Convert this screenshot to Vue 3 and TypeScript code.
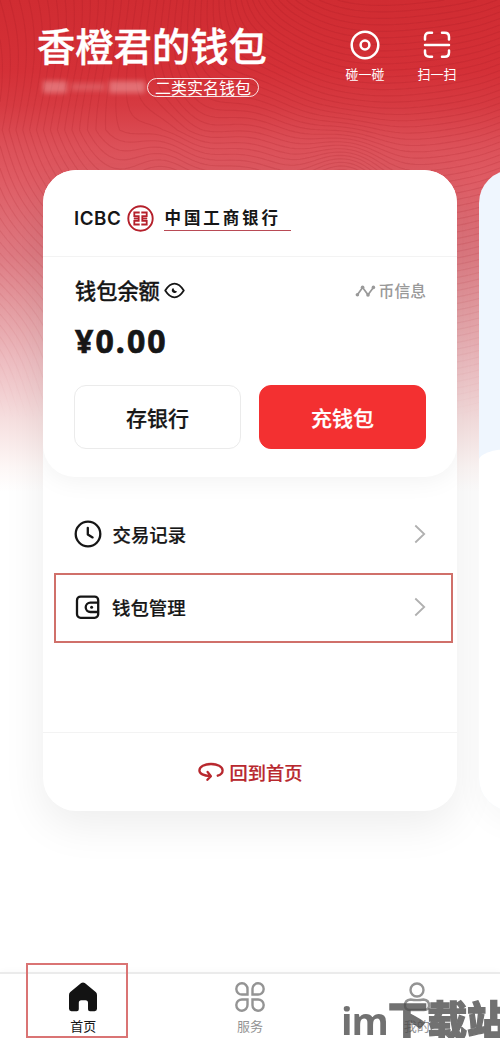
<script setup lang="ts">
interface Action { label: string; kind: 'touch' | 'scan' }
interface Row { label: string; kind: 'clock' | 'wallet'; marked: boolean }
interface Tab { label: string; kind: 'home' | 'service' | 'me'; active: boolean }

const actions: Action[] = [
  { label: '碰一碰', kind: 'touch' },
  { label: '扫一扫', kind: 'scan' },
]
const rows: Row[] = [
  { label: '交易记录', kind: 'clock', marked: false },
  { label: '钱包管理', kind: 'wallet', marked: true },
]
const tabs: Tab[] = [
  { label: '首页', kind: 'home', active: true },
  { label: '服务', kind: 'service', active: false },
  { label: '我的', kind: 'me', active: false },
]

// Height field whose contour lines decorate the red backdrop.
function field(x: number, y: number): number {
  const left = 45 - x / 8 + 1.3 * Math.sin(y / 45 + x / 60) + Math.max(0, y - 130) / 14
  const ridge = 6 * Math.exp(-((x - 165) ** 2) / 1500 - ((y - 190) ** 2) / 9000)
  const bowl = y / 6.5 + ((x - 400) ** 2) * 0.00035 + Math.sin(x / 30) * 0.4
  const t = 1 / (1 + Math.exp(-(x - 235 + (y - 60) * 0.25) / 22))
  const knot = 8 * Math.exp(-((x - 345) ** 2) / 1500 - ((y - 185) ** 2) / 2200)
  return left * (1 - t) + (bowl + knot) * t + ridge
}

function contours(w: number, h: number, s: number): string {
  const out: string[] = []
  for (let x = 0; x < w; x += s) {
    for (let y = 0; y < h; y += s) {
      const c = [[x, y], [x + s, y], [x + s, y + s], [x, y + s]]
      const v = c.map(([a, b]) => field(a, b))
      const lo = Math.ceil(Math.min(...v))
      const hi = Math.floor(Math.max(...v))
      for (let level = lo; level <= hi; level++) {
        const p: string[] = []
        for (let i = 0; i < 4; i++) {
          const j = (i + 1) % 4
          if ((v[i] < level) !== (v[j] < level)) {
            const k = (level - v[i]) / (v[j] - v[i])
            p.push(`${(c[i][0] + (c[j][0] - c[i][0]) * k).toFixed(1)} ${(c[i][1] + (c[j][1] - c[i][1]) * k).toFixed(1)}`)
          }
        }
        if (p.length >= 2) out.push(`M${p[0]}L${p[1]}`)
      }
    }
  }
  return out.join('')
}
const linePath = contours(500, 420, 5)
</script>

<template>
  <div class="page">
    <svg class="lines" width="500" height="420" viewBox="0 0 500 420">
      <defs>
        <linearGradient id="fade" x1="0" y1="0" x2="0" y2="1">
          <stop offset="0" stop-color="#fff" />
          <stop offset=".45" stop-color="#fff" stop-opacity=".8" />
          <stop offset="1" stop-color="#fff" stop-opacity="0" />
        </linearGradient>
        <mask id="m"><rect width="500" height="420" fill="url(#fade)" /></mask>
      </defs>
      <path :d="linePath" mask="url(#m)" fill="none" stroke="#a01822" stroke-opacity=".2" stroke-width="1.1" />
    </svg>

    <header class="header">
      <div class="owner">
        <h1>香橙君的钱包</h1>
        <div class="sub">
          <span class="masked"><i class="b1"></i><i class="b2"></i><i class="b3"></i></span>
          <span class="pill">二类实名钱包</span>
        </div>
      </div>
      <div class="actions">
        <div v-for="a in actions" :key="a.kind" class="action">
          <svg width="30" height="30" viewBox="0 0 30 30" fill="none" stroke="#fff" stroke-width="2.5" stroke-linecap="round">
            <template v-if="a.kind === 'touch'">
              <circle cx="15" cy="15" r="13.3" /><circle cx="15" cy="15" r="4.4" />
            </template>
            <path v-else d="M3 9.5V7Q3 2.8 7.2 2.8H10M20 2.8H22.8Q27 2.8 27 7V9.5M27 20.5V22.5Q27 26.8 22.8 26.8H20M10 26.8H7.2Q3 26.8 3 22.5V20.5M3 14.9H27" />
          </svg>
          <span>{{ a.label }}</span>
        </div>
      </div>
    </header>

    <main class="deck">
      <section class="card">
        <div class="top">
          <div class="bank">
            <span class="icbc">ICBC</span>
            <svg class="seal" width="27" height="27" viewBox="0 0 27 27" fill="none" stroke="#b5202b">
              <circle cx="13.5" cy="13.5" r="12.2" stroke-width="1.9" />
              <path stroke-width="1.8" d="M12.7 7.5H7.3V11.2H11.7V15.8H7.3V19.5H12.7M14.3 7.5H19.7V11.2H15.3V15.8H19.7V19.5H14.3M6.8 13.5H11.7M15.3 13.5H20.2" />
            </svg>
            <span class="bankname">中国工商银行</span>
          </div>
          <div class="balance">
            <div class="brow">
              <span class="btitle">钱包余额</span>
              <svg width="21" height="17" viewBox="0 0 21 17" fill="none" stroke="#161616" stroke-width="1.8" stroke-linejoin="round">
                <path d="M1.2 8.5Q5.6 1.6 10.5 1.6T19.8 8.5Q15.4 15.4 10.5 15.4T1.2 8.5Z" />
                <path d="M9.3 5.9A2.7 2.7 0 1 0 13 9.2Q10.4 9.5 9.3 5.9Z" fill="#161616" stroke="none" />
              </svg>
              <span class="coin">
                <svg width="21" height="14" viewBox="0 0 21 14" fill="none" stroke="#999" stroke-width="1.7">
                  <path d="M2.4 10.8L7.6 3.4L13 10.8L18.4 3.4" />
                  <g fill="#999" stroke="none"><circle cx="2.4" cy="10.8" r="1.8" /><circle cx="7.6" cy="3.2" r="1.8" /><circle cx="13" cy="10.9" r="1.8" /><circle cx="18.4" cy="3.4" r="1.8" /></g>
                </svg>
                币信息
              </span>
            </div>
            <div class="amount">¥0.00</div>
            <div class="buttons">
              <button class="btn">存银行</button>
              <button class="btn primary">充钱包</button>
            </div>
          </div>
        </div>
        <div class="list">
          <div v-for="r in rows" :key="r.kind" class="row" :class="{ marked: r.marked }">
            <svg width="28" height="28" viewBox="0 0 28 28" fill="none" stroke="#161616" stroke-width="2.3" stroke-linecap="round" stroke-linejoin="round">
              <template v-if="r.kind === 'clock'">
                <circle cx="14" cy="14" r="12.3" /><path d="M13.8 7.8V14.4L18.6 17.4" />
              </template>
              <template v-else>
                <rect x="4" y="3.6" width="21.2" height="21.2" rx="3.6" />
                <path d="M25 9.6H17.4A4.7 4.7 0 0 0 17.4 19H25" />
                <circle cx="18.6" cy="14.3" r="1.5" fill="#161616" stroke="none" />
              </template>
            </svg>
            <span>{{ r.label }}</span>
            <svg class="chev" width="12" height="20" viewBox="0 0 12 20" fill="none" stroke="#b0b0b0" stroke-width="1.8"><path d="M1.3 1.5L10.2 10L1.3 18.5" /></svg>
          </div>
        </div>
        <div class="foot">
          <svg width="26" height="20" viewBox="0 0 26 20" fill="none" stroke="#b8282e" stroke-width="2.3" stroke-linecap="round" stroke-linejoin="round">
            <path d="M19.7 13.7Q24.6 12 24.6 8.4C24.6 4.4 19.4 2 13 2S1.4 4.4 1.4 8.4C1.4 11.6 5.8 13.9 12 14.1M9.6 10L12.9 14.1L9.4 17.8" />
          </svg>
          <span>回到首页</span>
        </div>
      </section>
      <section class="card next"><div class="nextbody"></div></section>
    </main>

    <nav class="tabs">
      <div v-for="t in tabs" :key="t.kind" class="tab" :class="{ active: t.active }">
        <svg width="30" height="30" viewBox="0 0 30 30" fill="none" stroke="#949494" stroke-width="2.4">
          <path v-if="t.kind === 'home'" fill="#131313" stroke="none" d="M13.2 1.1Q15 -.3 16.8 1.1L27.7 10Q29 11.2 29 13V26.8Q29 29.2 26.6 29.2H22Q20 29.2 20 27.2V20.8Q20 18.2 17.5 18.2H13.3Q10.8 18.2 10.8 20.8V27.2Q10.8 29.2 8.8 29.2H3.4Q1 29.2 1 26.8V13Q1 11.2 2.3 10Z" />
          <g v-else-if="t.kind === 'service'">
            <path d="M12.5 12.5H7.2A5.6 5.6 0 1 1 12.5 7.2Z" />
            <path d="M17.5 12.5V7.2A5.6 5.6 0 1 1 22.8 12.5Z" />
            <path d="M12.5 17.5V22.8A5.6 5.6 0 1 1 7.2 17.5Z" />
            <path d="M17.5 17.5H22.8A5.6 5.6 0 1 1 17.5 22.8Z" />
          </g>
          <g v-else>
            <circle cx="15" cy="8" r="6.5" />
            <path d="M8.5 17.5Q15 18.8 21.5 17.5Q27 18 27 23.5Q27 28 22 28H8Q3 28 3 23.5Q3 18 8.5 17.5Z" />
          </g>
        </svg>
        <span>{{ t.label }}</span>
      </div>
    </nav>
    <div class="mark"></div>
    <div class="watermark"><span class="im">im</span><span class="cn">下载站</span></div>
  </div>
</template>

<style scoped>
* { box-sizing: border-box; }
.page {
  position: relative;
  width: 500px;
  height: 1038px;
  overflow: hidden;
  display: flex;
  flex-direction: column;
  font-family: "Noto Sans CJK SC", sans-serif;
  color: #161616;
  background: linear-gradient(#d02c32 0, #d43037 70px, #d63a41 105px, #dc5058 145px, #df5c64 180px, #de7a82 255px, #e59ea3 310px, #eebfc3 365px, #f6dfdf 420px, #fdf6f5 465px, #fff 492px);
}
.lines { position: absolute; left: 0; top: 0; }
.header { position: relative; height: 170px; display: flex; justify-content: space-between; padding: 23px 27px 0 37px; color: #fff; flex: none; }
h1 { margin: 0; font-size: 38.3px; line-height: 44px; font-weight: 500; white-space: nowrap; -webkit-text-stroke: .4px #fff; }
.sub { display: flex; align-items: center; margin-top: 10.5px; }
.masked { width: 110px; height: 18px; display: flex; align-items: center; gap: 4px; padding-left: 6px; filter: blur(2.5px); }
.masked i { display: block; height: 12px; background: rgba(255, 225, 225, .34); }
.b1 { width: 24px; }
.masked .b2 { width: 34px; height: 8px; opacity: .6; }
.b3 { width: 36px; }
.pill { height: 19px; width: 112px; border: 1px solid rgba(255, 255, 255, .85); border-radius: 10px; font-size: 16px; line-height: 17px; text-align: center; white-space: nowrap; }
.actions { display: flex; padding-top: 7px; }
.action { width: 72px; display: flex; flex-direction: column; align-items: center; font-size: 13px; line-height: 18px; }
.action span { margin-top: 5px; }
.deck { position: relative; display: flex; gap: 22px; padding-left: 43px; flex: none; height: 641px; }
.card { width: 414px; height: 641px; flex: none; border-radius: 33px; overflow: hidden; background: #fff; display: flex; flex-direction: column; box-shadow: 0 14px 44px rgba(0, 0, 0, .075); }
.next { background: #eff6fe; box-shadow: 0 14px 30px rgba(0, 0, 0, .03); }
.nextbody { margin-top: 279px; flex: 1; background: #fff; border-radius: 32px 0 0 0 / 11px 0 0 0; }
.top { height: 307px; background: #fff; border-radius: 0 0 32px 32px; flex: none; position: relative; box-shadow: 0 3px 26px rgba(0, 0, 0, .06); }
.bank { height: 87px; border-bottom: 1px solid #f3f3f3; padding: 11px 0 0 31px; display: flex; align-items: center; }
.icbc { font-family: Inter, sans-serif; font-weight: 600; font-size: 18.8px; letter-spacing: .5px; width: 53px; }
.seal { display: block; }
.bankname { margin-left: 9.5px; width: 127px; height: 25px; line-height: 22px; padding-left: 1px; font-size: 16.5px; font-weight: 700; letter-spacing: 2.9px; border-bottom: 1px solid #b94a55; white-space: nowrap; }
.balance { padding: 17px 31px 0; }
.brow { display: flex; align-items: center; height: 32px; }
.btitle { font-size: 21.2px; font-weight: 500; margin: -2px 4px 0 1px; -webkit-text-stroke: .3px #161616; }
.coin { margin-left: auto; display: flex; align-items: center; gap: 3px; color: #999; font-size: 15.8px; font-weight: 500; line-height: 20px; margin-top: 1px; }
.amount { font-family: "Noto Sans", sans-serif; font-weight: 700; font-size: 32px; line-height: 40px; margin-top: 15px; letter-spacing: 2.1px; height: 60px; padding-left: 1px; -webkit-text-stroke: .7px #161616; }
.buttons { display: flex; gap: 18px; margin-top: 4px; }
.btn { flex: 1; height: 64px; border: 1.5px solid #ebebeb; border-radius: 12px; background: #fff; color: #161616; font: 500 21px/1 "Noto Sans CJK SC", sans-serif; padding: 0; -webkit-text-stroke: .25px; }
.primary { background: #f33031; border-color: #f33031; color: #fff; }
.list { height: 256px; border-bottom: 1px solid #f3f3f3; padding: 22px 4px 0 11px; flex: none; }
.row { height: 70px; display: flex; align-items: center; padding: 0 27px 0 20px; font-size: 18.4px; font-weight: 500; margin-bottom: 4px; -webkit-text-stroke: .2px; }
.row span { margin-left: 10.5px; }
.marked { border: 2px solid #d0706a; padding: 0 25px 3px 17px; }
.marked span { margin-left: 11px; }
.chev { margin-left: auto; }
.foot { flex: 1; display: flex; align-items: center; justify-content: center; gap: 6px; color: #b8282e; font-size: 18.2px; font-weight: 500; -webkit-text-stroke: .2px; }
.tabs { position: relative; margin-top: auto; height: 66px; border-top: 2px solid #ebebeb; background: #fff; display: flex; padding: 8px 0 0; box-shadow: 0 -2px 6px rgba(0, 0, 0, .02); }
.tab { flex: 1; display: flex; flex-direction: column; align-items: center; font-size: 13px; line-height: 18px; color: #949494; }
.tab span { margin-top: 5px; }
.active { color: #161616; }
.mark { position: absolute; left: 26px; top: 963px; width: 102px; height: 75px; border: 2px solid #da7474; }
.watermark { position: absolute; left: 341px; top: 991px; display: flex; align-items: baseline; color: #4a4a4a; opacity: .78; white-space: nowrap; line-height: 54px; }
.im { font-family: "Open Sans", sans-serif; font-weight: 700; font-size: 38px; width: 47px; letter-spacing: -1px; }
.cn { font-size: 39.5px; font-weight: 900; -webkit-text-stroke: 1.4px #4a4a4a; }
</style>
